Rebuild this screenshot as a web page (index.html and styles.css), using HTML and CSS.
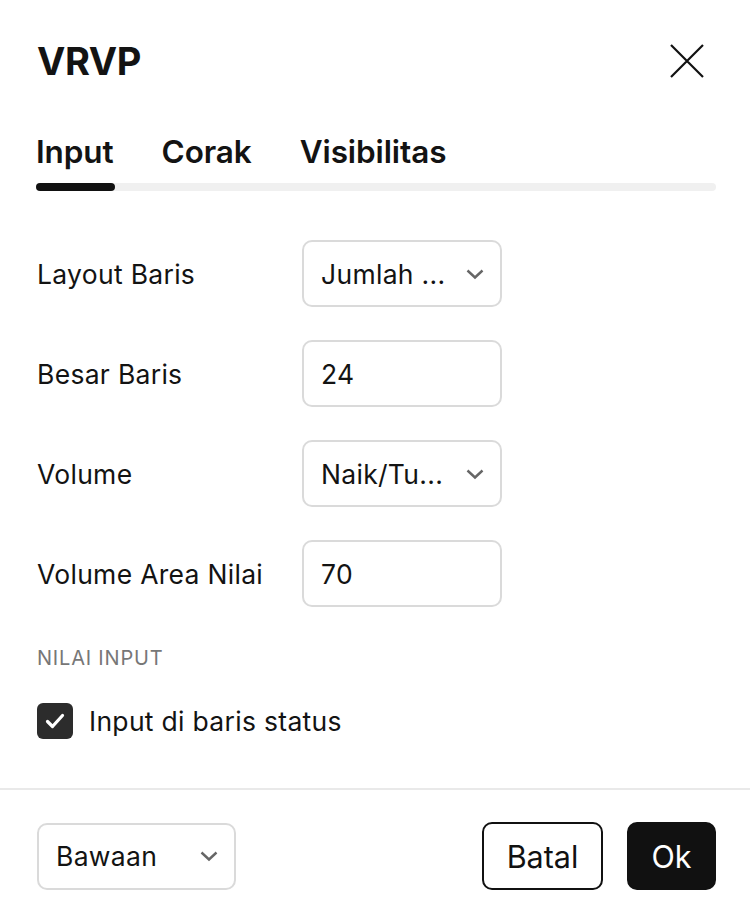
FILE: index.html
```html
<!DOCTYPE html>
<html lang="id">
<head>
<meta charset="utf-8">
<title>VRVP</title>
<link rel="stylesheet" href="styles.css">
</head>
<body>
<div class="dialog">
  <header class="header">
    <h1 class="title">VRVP</h1>
    <button class="close" aria-label="Tutup">
      <svg width="34" height="34" viewBox="0 0 34 34"><path d="M1 1L33 33M33 1L1 33" stroke="#111" stroke-width="2.2" fill="none"/></svg>
    </button>
  </header>
  <nav class="tabs">
    <div class="tab-list">
      <span class="tab active">Input</span>
      <span class="tab">Corak</span>
      <span class="tab">Visibilitas</span>
    </div>
    <div class="track"><div class="indicator"></div></div>
  </nav>
  <section class="form">
    <div class="row">
      <span class="label">Layout Baris</span>
      <div class="field select"><span>Jumlah ...</span><svg class="chev" width="20" height="12" viewBox="0 0 20 12"><path d="M2.5 2.5l7.5 7 7.5-7" stroke="#666" stroke-width="2.4" fill="none"/></svg></div>
    </div>
    <div class="row">
      <span class="label">Besar Baris</span>
      <div class="field"><span>24</span></div>
    </div>
    <div class="row">
      <span class="label">Volume</span>
      <div class="field select"><span>Naik/Tu...</span><svg class="chev" width="20" height="12" viewBox="0 0 20 12"><path d="M2.5 2.5l7.5 7 7.5-7" stroke="#666" stroke-width="2.4" fill="none"/></svg></div>
    </div>
    <div class="row">
      <span class="label">Volume Area Nilai</span>
      <div class="field"><span>70</span></div>
    </div>
    <div class="section-title">NILAI INPUT</div>
    <label class="check-row">
      <span class="checkbox"><svg width="20" height="16" viewBox="0 0 20 16"><path d="M2.5 8.5l5 5L17.5 2.5" stroke="#fff" stroke-width="3.2" fill="none" stroke-linecap="round" stroke-linejoin="round"/></svg></span>
      <span class="check-label">Input di baris status</span>
    </label>
  </section>
  <footer class="footer">
    <div class="field select small"><span>Bawaan</span><svg class="chev" width="20" height="12" viewBox="0 0 20 12"><path d="M2.5 2.5l7.5 7 7.5-7" stroke="#666" stroke-width="2.4" fill="none"/></svg></div>
    <div class="actions">
      <button class="btn outline">Batal</button>
      <button class="btn primary">Ok</button>
    </div>
  </footer>
</div>
</body>
</html>
```
FILE: styles.css
```css
* { box-sizing: border-box; }
html, body { margin: 0; padding: 0; background: #fff; }
body {
  font-family: Inter, "Noto Sans", "Liberation Sans", sans-serif;
  color: #131313;
  width: 750px;
  height: 918px;
  overflow: hidden;
}
.dialog { display: flex; flex-direction: column; height: 100%; }
.header {
  display: flex;
  justify-content: space-between;
  align-items: center;
  padding: 36px 46px 0 37px;
  height: 86px;
}
.title { margin: 0; font-size: 38px; font-weight: 700; letter-spacing: -0.4px; line-height: 1; }
.close { border: 0; background: none; padding: 0; width: 34px; height: 34px; display: flex; }
.tabs { padding: 48px 34px 0 36px; }
.tab-list { display: flex; gap: 48px; }
.tab { font-size: 31.5px; font-weight: 600; line-height: 36px; letter-spacing: -0.1px; }
.track { margin-top: 13px; height: 8px; background: #f0f0f0; border-radius: 4px; }
.indicator { width: 79px; height: 8px; background: #111; border-radius: 4px; }
.form { padding: 49px 34px 0 37px; }
.row { display: flex; align-items: center; height: 67px; margin-bottom: 33px; }
.label { width: 265px; font-size: 26.5px; line-height: 30px; letter-spacing: 0.3px; }
.field {
  width: 200px;
  height: 67px;
  border: 2px solid #dadada;
  border-radius: 10px;
  display: flex;
  align-items: center;
  justify-content: space-between;
  padding: 0 15px 0 17px;
  font-size: 26.5px;
  letter-spacing: 0.3px;
}
.chev { flex: none; }
.section-title { font-size: 20px; color: #777; margin-top: 39px; line-height: 24px; letter-spacing: 0.8px; }
.check-row { display: flex; align-items: center; gap: 16px; margin-top: 33px; }
.checkbox {
  width: 36px; height: 36px; background: #2c2c2c; border-radius: 6px;
  display: flex; align-items: center; justify-content: center;
}
.check-label { font-size: 26.5px; letter-spacing: 0.3px; }
.footer {
  margin-top: auto;
  border-top: 2px solid #e9e9e9;
  height: 130px;
  display: flex;
  align-items: center;
  justify-content: space-between;
  padding: 4px 34px 0 37px;
}
.field.small { width: 199px; height: 67px; }
.actions { display: flex; gap: 24px; }
.btn {
  font-family: inherit;
  height: 68px;
  border-radius: 10px;
  font-size: 30.5px;
  padding: 0;
  cursor: pointer;
}
.btn.outline { border: 2px solid #111; background: #fff; color: #111; width: 121px; }
.btn.primary { border: 2px solid #111; background: #111; color: #fff; width: 89px; }
```
